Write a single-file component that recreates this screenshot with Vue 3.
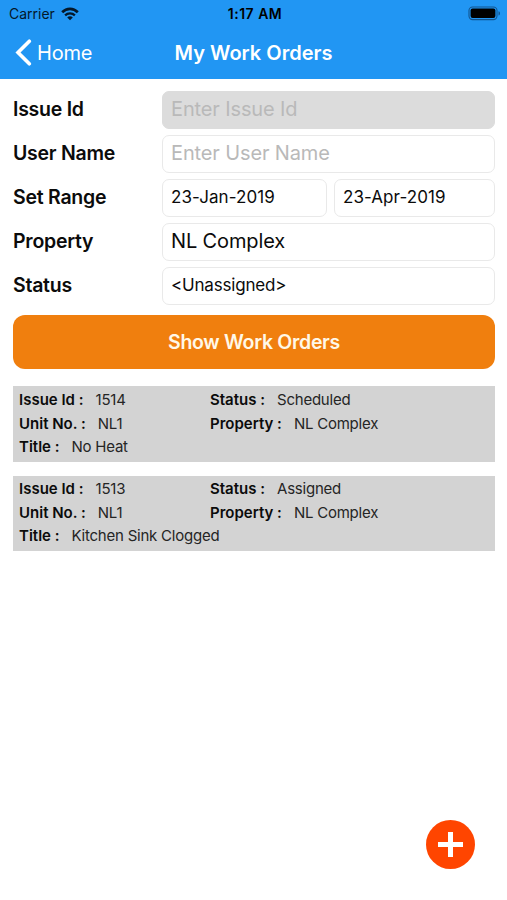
<script setup>
const fields = [
  { label: 'Issue Id', boxes: [{ text: 'Enter Issue Id', kind: 'placeholder disabled' }] },
  { label: 'User Name', boxes: [{ text: 'Enter User Name', kind: 'placeholder' }] },
  { label: 'Set Range', boxes: [{ text: '23-Jan-2019', kind: 'small from' }, { text: '23-Apr-2019', kind: 'small' }] },
  { label: 'Property', boxes: [{ text: 'NL Complex', kind: 'value' }] },
  { label: 'Status', boxes: [{ text: '<Unassigned>', kind: 'small status' }] },
]

const orders = [
  { id: '1514', status: 'Scheduled', unit: 'NL1', property: 'NL Complex', title: 'No Heat' },
  { id: '1513', status: 'Assigned', unit: 'NL1', property: 'NL Complex', title: 'Kitchen Sink Clogged' },
]
</script>

<template>
  <div class="screen">
    <header>
      <div class="status-bar">
        <div class="carrier">
          <span>Carrier</span>
          <svg width="18" height="14" viewBox="0 0 18 14">
            <path d="M1.200 5.200C5.600.7 12.400.7 16.800 5.200" fill="none" stroke="#04182a" stroke-width="2.700" />
            <path d="M4.100 8.300c2.800-2.700 7-2.700 9.800 0" fill="none" stroke="#04182a" stroke-width="2.300" />
            <path d="M9 13.200 6.200 10.400c1.600-1.400 4-1.400 5.600 0z" fill="#04182a" />
          </svg>
        </div>
        <span class="clock">1:17 AM</span>
        <svg class="battery" width="33" height="15" viewBox="0 0 33 15">
          <rect x="1" y="1" width="28" height="12.600" rx="3.600" fill="none" stroke="#12558f" stroke-width="1.100" />
          <rect x="2.600" y="2.600" width="24.800" height="9.400" rx="2" fill="#000" />
          <path d="M30.500 5.200c2 .7 2 3.600 0 4.300z" fill="#12558f" />
        </svg>
      </div>
      <nav>
        <a class="back">
          <svg width="17" height="27" viewBox="0 0 17 27">
            <path d="M14.300 2.200 3 13.500l11.300 11.300" fill="none" stroke="#fff" stroke-width="3.600" stroke-linecap="round" />
          </svg>
          <span>Home</span>
        </a>
        <h1><span>My Work Orders</span></h1>
      </nav>
    </header>

    <main>
      <form>
        <div v-for="f in fields" :key="f.label" class="row">
          <label><span>{{ f.label }}</span></label>
          <div class="boxes">
            <div v-for="b in f.boxes" :key="b.text" class="box" :class="b.kind"><span>{{ b.text }}</span></div>
          </div>
        </div>
        <button type="button"><span>Show Work Orders</span></button>
      </form>

      <section class="orders">
        <article v-for="o in orders" :key="o.id">
          <div class="cell"><b>Issue Id :</b><span>{{ o.id }}</span></div>
          <div class="cell"><b>Status :</b><span>{{ o.status }}</span></div>
          <div class="cell"><b>Unit No. :</b><span>{{ o.unit }}</span></div>
          <div class="cell"><b>Property :</b><span>{{ o.property }}</span></div>
          <div class="cell wide"><b>Title :</b><span>{{ o.title }}</span></div>
        </article>
      </section>
    </main>

    <div class="fab">
      <svg width="49" height="49" viewBox="0 0 49 49">
        <circle cx="24.500" cy="24.500" r="24.500" fill="#ff4500" />
        <path d="M24.500 12v25M12 24.500h25" stroke="#fff" stroke-width="5" />
      </svg>
    </div>
  </div>
</template>

<style>
body {
  background: #fff;
}
</style>

<style scoped>
.screen {
  position: relative;
  height: 900px;
  overflow: hidden;
  background: #fff;
  color: #0b0b0b;
  font-family: Inter, "Liberation Sans", sans-serif;
}
header {
  height: 79px;
  background: #2196f3;
}
.status-bar {
  display: grid;
  grid-template-columns: 1fr auto 1fr;
  align-items: center;
  height: 27px;
  padding: 0 6px 0 9px;
  font-size: 14px;
  color: #04182a;
}
.carrier {
  display: flex;
  align-items: center;
  gap: 6px;
}
.clock {
  color: #000;
  font-weight: 600;
  letter-spacing: 0.5px;
}
.battery {
  justify-self: end;
}
nav {
  display: grid;
  grid-template-columns: 1fr auto 1fr;
  align-items: center;
  height: 51px;
  padding: 0 15px;
  color: #fff;
}
.back {
  display: flex;
  align-items: center;
  gap: 5px;
  font-size: 20px;
  letter-spacing: -0.2px;
}
h1 {
  margin: 0;
  font-size: 20px;
  font-weight: 600;
}
form {
  display: flex;
  flex-direction: column;
  gap: 7px;
  padding: 12px 12px 0 13px;
}
.row {
  display: flex;
  align-items: center;
  height: 37px;
}
label {
  width: 149px;
  padding-bottom: 1px;
  font-size: 19.500px;
  font-weight: 600;
  letter-spacing: -0.25px;
}
.boxes {
  display: flex;
  flex: 1;
  gap: 7px;
}
.box {
  box-sizing: border-box;
  display: flex;
  flex: 1;
  align-items: center;
  height: 38px;
  padding: 0 8px 2px;
  border: 1px solid #e9e9e9;
  border-radius: 7px;
  font-size: 20px;
  letter-spacing: -0.13px;
}
.placeholder {
  color: #b9b9b9;
}
.disabled {
  border-color: #dcdcdc;
  background: #dcdcdc;
}
.small {
  font-size: 17px;
  letter-spacing: 0.07px;
}
.from {
  flex: 0 0 165px;
}
.status {
  letter-spacing: -0.2px;
}
button {
  height: 54px;
  margin-top: 4px;
  padding: 0;
  border: 0;
  border-radius: 12px;
  background: #f07f0e;
  color: #fff8e8;
  font-family: inherit;
  font-size: 19.500px;
  font-weight: 600;
  letter-spacing: -0.3px;
}
.orders {
  display: flex;
  flex-direction: column;
  gap: 14px;
  padding: 17px 12px 0 13px;
}
article {
  box-sizing: border-box;
  display: grid;
  grid-template-columns: 191px 1fr;
  grid-template-rows: 24px 24px 23px;
  align-items: center;
  height: 76px;
  padding: 1px 6px;
  background: #d3d3d3;
  font-size: 15px;
}
article + article {
  height: 75px;
  margin-top: -0.5px;
  grid-template-rows: 24px 23px 24px;
}
.cell {
  display: flex;
  gap: 12px;
  white-space: nowrap;
}
.cell b {
  font-weight: 600;
}
.cell span {
  color: #252525;
  letter-spacing: -0.23px;
}
.wide {
  grid-column: 1 / 3;
}
.fab {
  position: absolute;
  right: 32px;
  bottom: 31px;
  width: 49px;
  height: 49px;
}
.fab svg {
  display: block;
}
</style>
